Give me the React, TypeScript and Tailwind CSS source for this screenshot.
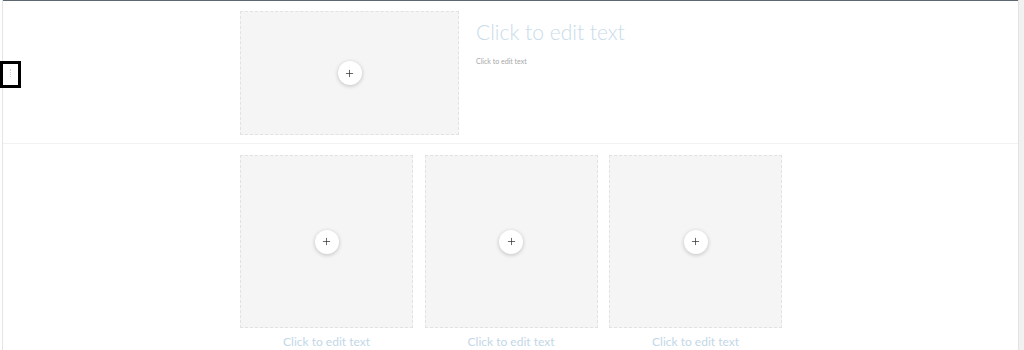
import { Plus } from 'lucide-react'

function Placeholder({ className }: { className: string }) {
  return (
    <div className={`flex items-center justify-center bg-[#f5f5f5] border border-dashed border-[#e2e2e2] ${className}`}>
      <button className="flex items-center justify-center w-6 h-6 rounded-full bg-white shadow-[0_1px_4px_rgba(0,0,0,0.22)] text-[#333]">
        <Plus size={11} strokeWidth={1.6} />
      </button>
    </div>
  )
}

export default function App() {
  const cards = [0, 1, 2]

  return (
    <div className="relative flex w-[1024px] h-[350px] bg-white overflow-hidden font-['Lato','Open_Sans',sans-serif]">
      <div className="flex flex-col flex-1 ml-[2px] border-l border-[#e4e4e4]">
        <div className="flex flex-col flex-1 border-t border-[#5d6870]">
          {/* top block */}
          <div className="flex h-[143px] pt-[10px] pl-[237px] gap-[17px] border-b border-[#f2f2f2]">
            <Placeholder className="w-[219px] h-[124px]" />
            <div className="flex flex-col pt-[7px]">
              <span className="text-[21px] leading-[28px] font-light text-[#c9dcea]">Click to edit text</span>
              <span className="mt-[10px] text-[7px] leading-[10px] text-[#a8a8a8]">Click to edit text</span>
            </div>
          </div>

          {/* bottom row */}
          <div className="flex pt-[11px] pl-[237px] gap-[11.5px]">
            {cards.map(i => (
              <div key={i} className="flex flex-col items-center w-[173px]">
                <Placeholder className="w-[173px] h-[173px]" />
                <span className="mt-[6px] text-[12px] leading-[16px] text-[#c2d7e7]">Click to edit text</span>
              </div>
            ))}
          </div>
        </div>
        <div className="h-[3px] bg-[#eef1f9]" />
      </div>

      <div className="w-[6px] bg-[#f1f1f1] border-l border-[#e2e2e2]" />

      <div className="absolute left-0 top-[61px] w-[21px] h-[27px] border-[3px] border-black bg-white flex items-start justify-center pt-[5px]">
        <div className="w-[2px] h-[8px] border-l border-dotted border-[#d0d0d0]" />
      </div>
    </div>
  )
}
